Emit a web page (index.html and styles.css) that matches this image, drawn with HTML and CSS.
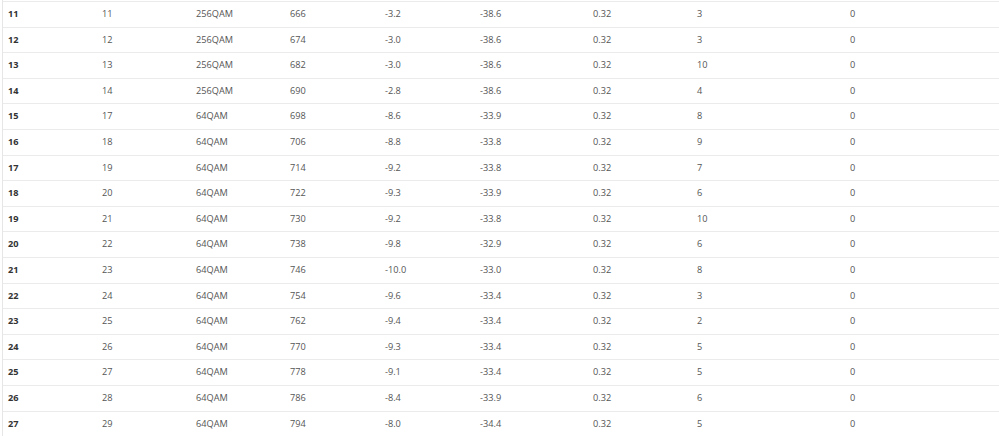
FILE: index.html
```html
<!DOCTYPE html>
<html>
<head>
<meta charset="utf-8">
<link rel="stylesheet" href="styles.css">
</head>
<body>
<div class="wrap">
<table class="grid">
<colgroup>
<col class="c1"><col class="c2"><col class="c3"><col class="c4"><col class="c5"><col class="c6"><col class="c7"><col class="c8"><col class="c9">
</colgroup>
<tbody>
<tr><th>11</th><td>11</td><td>256QAM</td><td>666</td><td>-3.2</td><td>-38.6</td><td>0.32</td><td>3</td><td>0</td></tr>
<tr><th>12</th><td>12</td><td>256QAM</td><td>674</td><td>-3.0</td><td>-38.6</td><td>0.32</td><td>3</td><td>0</td></tr>
<tr><th>13</th><td>13</td><td>256QAM</td><td>682</td><td>-3.0</td><td>-38.6</td><td>0.32</td><td>10</td><td>0</td></tr>
<tr><th>14</th><td>14</td><td>256QAM</td><td>690</td><td>-2.8</td><td>-38.6</td><td>0.32</td><td>4</td><td>0</td></tr>
<tr><th>15</th><td>17</td><td>64QAM</td><td>698</td><td>-8.6</td><td>-33.9</td><td>0.32</td><td>8</td><td>0</td></tr>
<tr><th>16</th><td>18</td><td>64QAM</td><td>706</td><td>-8.8</td><td>-33.8</td><td>0.32</td><td>9</td><td>0</td></tr>
<tr><th>17</th><td>19</td><td>64QAM</td><td>714</td><td>-9.2</td><td>-33.8</td><td>0.32</td><td>7</td><td>0</td></tr>
<tr><th>18</th><td>20</td><td>64QAM</td><td>722</td><td>-9.3</td><td>-33.9</td><td>0.32</td><td>6</td><td>0</td></tr>
<tr><th>19</th><td>21</td><td>64QAM</td><td>730</td><td>-9.2</td><td>-33.8</td><td>0.32</td><td>10</td><td>0</td></tr>
<tr><th>20</th><td>22</td><td>64QAM</td><td>738</td><td>-9.8</td><td>-32.9</td><td>0.32</td><td>6</td><td>0</td></tr>
<tr><th>21</th><td>23</td><td>64QAM</td><td>746</td><td>-10.0</td><td>-33.0</td><td>0.32</td><td>8</td><td>0</td></tr>
<tr><th>22</th><td>24</td><td>64QAM</td><td>754</td><td>-9.6</td><td>-33.4</td><td>0.32</td><td>3</td><td>0</td></tr>
<tr><th>23</th><td>25</td><td>64QAM</td><td>762</td><td>-9.4</td><td>-33.4</td><td>0.32</td><td>2</td><td>0</td></tr>
<tr><th>24</th><td>26</td><td>64QAM</td><td>770</td><td>-9.3</td><td>-33.4</td><td>0.32</td><td>5</td><td>0</td></tr>
<tr><th>25</th><td>27</td><td>64QAM</td><td>778</td><td>-9.1</td><td>-33.4</td><td>0.32</td><td>5</td><td>0</td></tr>
<tr><th>26</th><td>28</td><td>64QAM</td><td>786</td><td>-8.4</td><td>-33.9</td><td>0.32</td><td>6</td><td>0</td></tr>
<tr><th>27</th><td>29</td><td>64QAM</td><td>794</td><td>-8.0</td><td>-34.4</td><td>0.32</td><td>5</td><td>0</td></tr>
</tbody>
</table>
</div>
</body>
</html>
```

FILE: styles.css
```css
html, body {
  margin: 0;
  padding: 0;
  background: #fff;
}
.wrap {
  margin-left: 2px;
  padding-top: 1px;
  border-left: 1px solid #e6e6e6;
  overflow: hidden;
}
.grid {
  border-collapse: collapse;
  table-layout: fixed;
  width: 1100px;
  font-family: "Open Sans", "Noto Sans", sans-serif;
  font-size: 9.2px;
  color: #555;
}
.c1 { width: 94px; }
.c2 { width: 94px; }
.c3 { width: 94px; }
.c4 { width: 95px; }
.c5 { width: 95px; }
.c6 { width: 113px; }
.c7 { width: 104px; }
.c8 { width: 153px; }
.c9 { width: 258px; }
.grid th, .grid td {
  border-top: 1px solid #ebebeb;
  padding: 5px 5px;
  height: 14.6px;
  line-height: 14.6px;
  text-align: left;
  white-space: nowrap;
}
.grid th {
  font-weight: bold;
  color: #333;
}
```
